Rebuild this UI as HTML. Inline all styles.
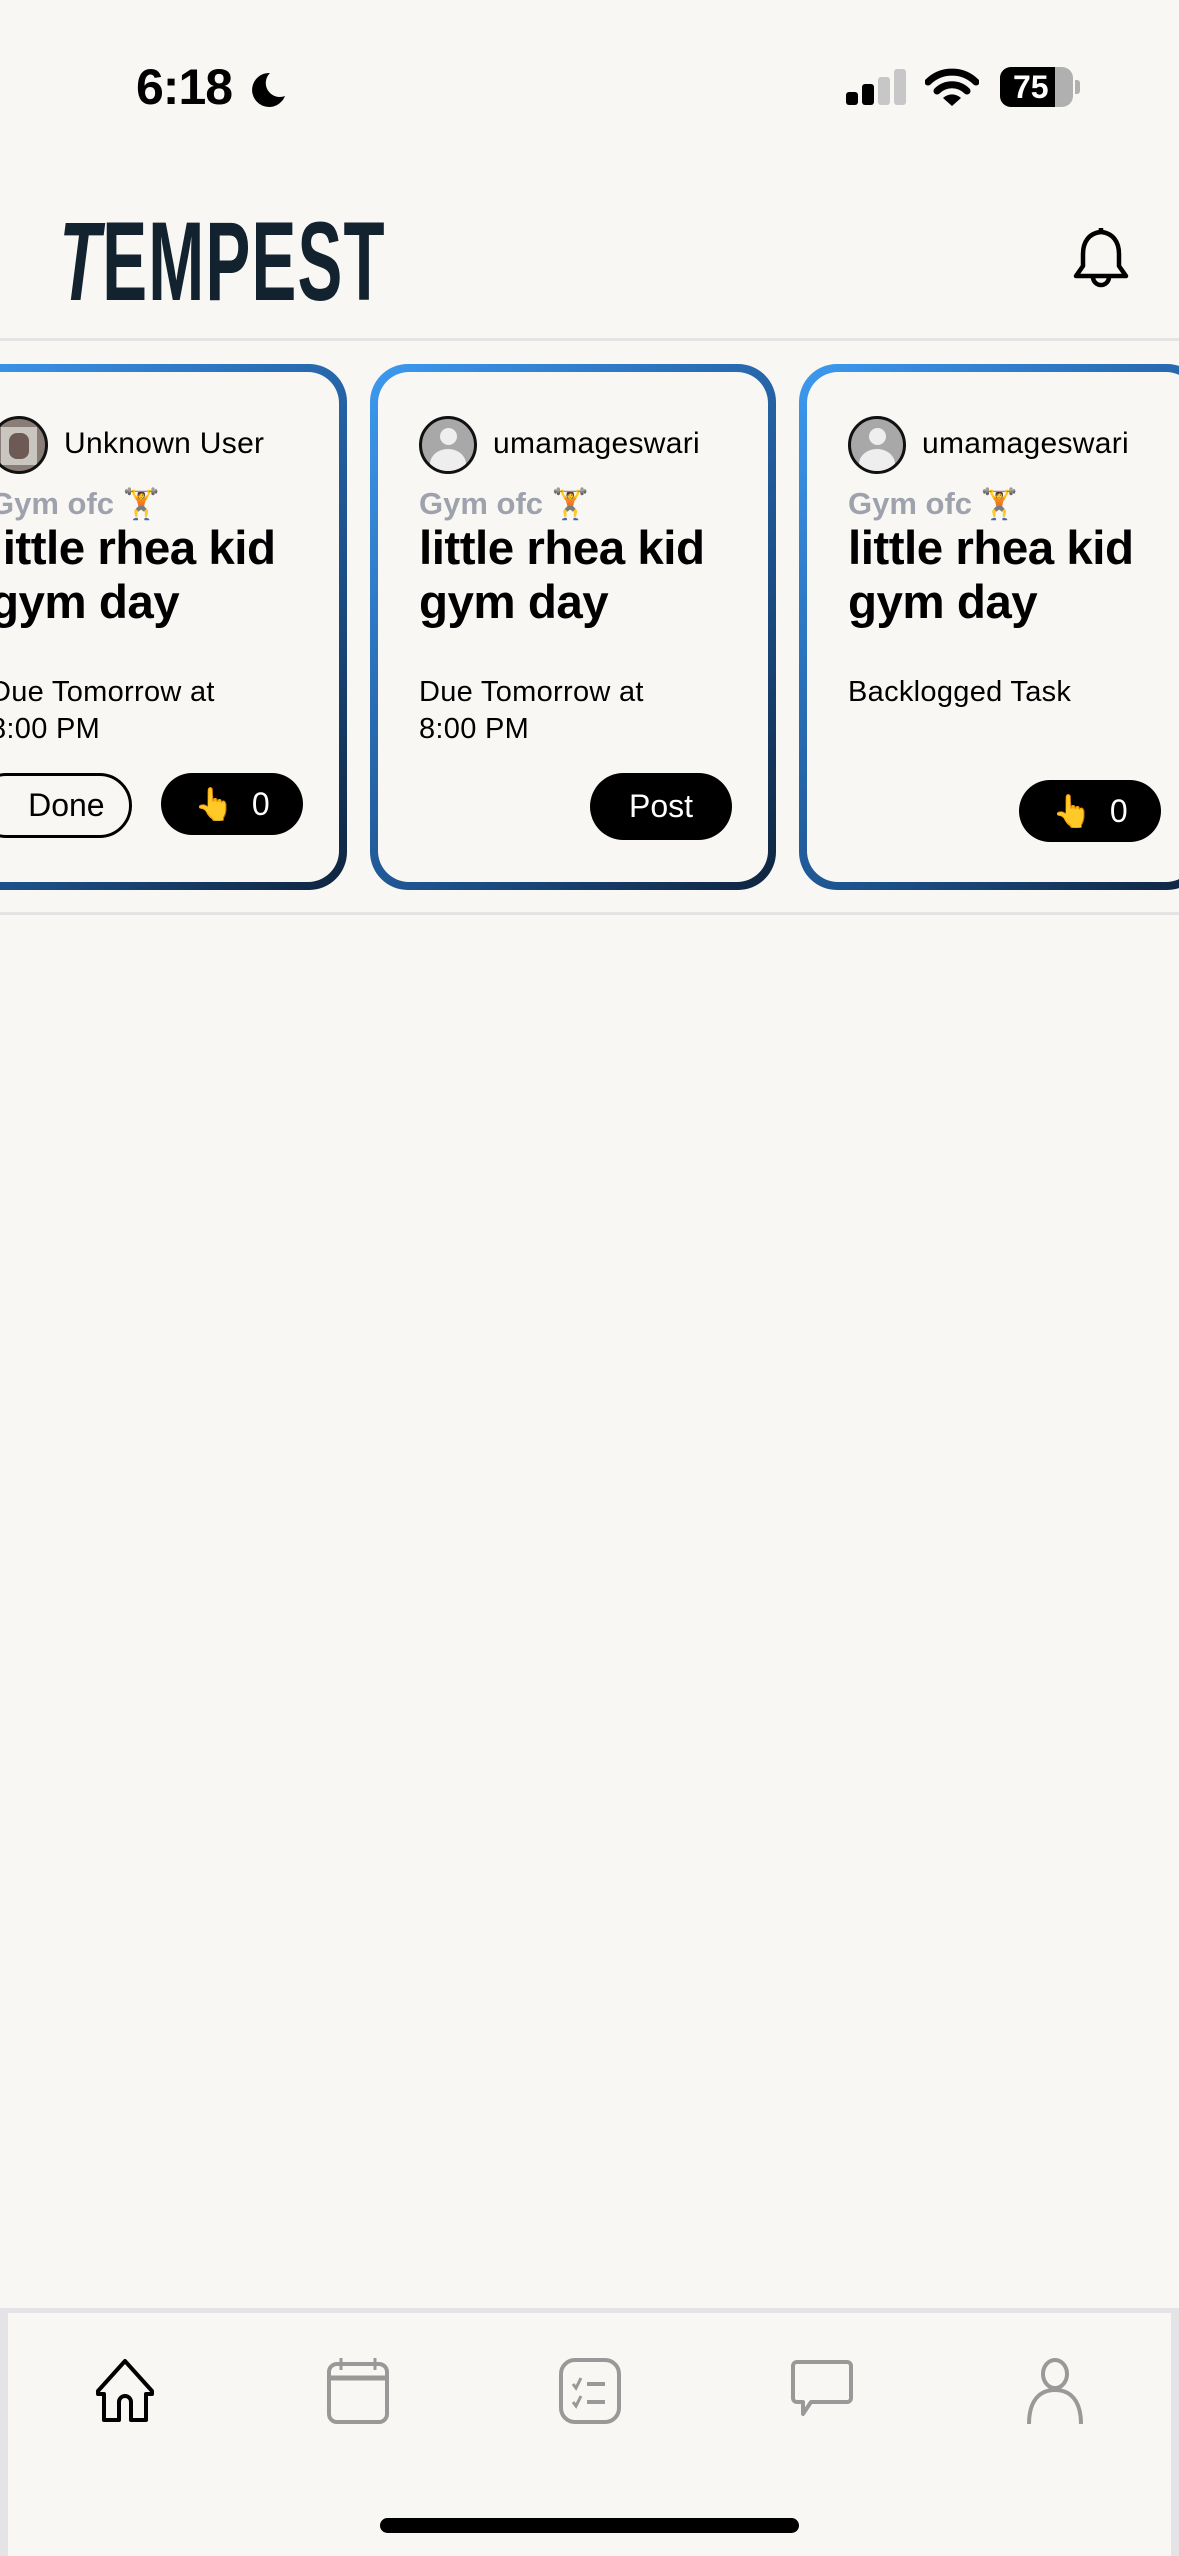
<!DOCTYPE html>
<html><head><meta charset="utf-8">
<style>
*{margin:0;padding:0;box-sizing:border-box}
html,body{width:1179px;height:2556px;overflow:hidden;background:#f8f7f4;font-family:"Liberation Sans",sans-serif;color:#000}
.abs{position:absolute}
.time{left:136px;top:58px;font-size:50px;font-weight:700;letter-spacing:-1px}
.logo{left:60px;top:206px;font-size:112px;font-weight:700;color:#13222f;transform:scaleX(0.6);transform-origin:left top;letter-spacing:2px;line-height:1;white-space:nowrap}
.hline{left:0;width:1179px;height:3px;background:#e4e4e4}
.card{top:364px;width:406px;height:526px;border-radius:38px;padding:8px;background:linear-gradient(135deg,#3d9af0 0%,#2a6fb8 35%,#1c4f88 65%,#0f243d 100%)}
.inner{width:100%;height:100%;border-radius:31px;background:#f8f7f4;position:relative}
.av{position:absolute;left:41px;top:44px;width:58px;height:58px;border-radius:50%;border:3px solid #111;background:#a8a8a8;overflow:hidden}
.uname{position:absolute;left:115px;top:55px;font-size:30px;letter-spacing:0.3px}
.gym{position:absolute;left:41px;top:114px;font-size:31px;font-weight:700;color:#9ea2ad}
.title{position:absolute;left:41px;top:150px;font-size:47.5px;font-weight:700;line-height:54px;letter-spacing:-0.5px}
.due{position:absolute;left:41px;top:302px;font-size:29px;line-height:37px;letter-spacing:0.3px}
.btn{position:absolute;border-radius:34px;font-size:32px;display:flex;align-items:center;justify-content:center}
.black{background:#000;color:#fff}
</style></head><body>
<div class="abs time">6:18</div>
<svg class="abs" style="left:248px;top:70px" width="40" height="40" viewBox="0 0 40 40"><path d="M22 3 A17 17 0 1 0 37 26 A14 14 0 0 1 22 3Z" fill="#000"/></svg>
<div class="abs" style="left:846px;top:92px;width:12px;height:13px;background:#000;border-radius:3px"></div>
<div class="abs" style="left:862px;top:84px;width:12px;height:21px;background:#000;border-radius:3px"></div>
<div class="abs" style="left:878px;top:77px;width:12px;height:28px;background:#c7c7c7;border-radius:3px"></div>
<div class="abs" style="left:894px;top:69px;width:12px;height:36px;background:#c7c7c7;border-radius:3px"></div>
<svg class="abs" style="left:925px;top:68px" width="54" height="40" viewBox="0 0 54 40"><path d="M3 14 A34 34 0 0 1 51 14" stroke="#000" stroke-width="7" fill="none" stroke-linecap="round"/><path d="M12 23 A21 21 0 0 1 42 23" stroke="#000" stroke-width="7" fill="none" stroke-linecap="round"/><path d="M27 38 L18 30 A13 13 0 0 1 36 30Z" fill="#000"/></svg>
<div class="abs" style="left:1000px;top:67px;width:73px;height:40px;border-radius:11px;background:#b0b0b0;overflow:hidden"><div style="width:55px;height:40px;background:#000"></div></div>
<div class="abs" style="left:1000px;top:67px;width:73px;height:40px;color:#fff;font-size:32px;font-weight:700;line-height:40px;padding-left:13px">75</div>
<div class="abs" style="left:1075px;top:80px;width:5px;height:14px;border-radius:0 3px 3px 0;background:#b0b0b0"></div>
<div class="abs logo"><span style="display:inline-block;transform:skewX(-12deg)">T</span>EMPEST</div>
<svg class="abs" style="left:1068px;top:224px" width="66" height="68" viewBox="0 0 66 68"><path d="M33 4 C33 4 33 8 33 8 C21 9 15 18 15 30 L15 42 L8 52 L58 52 L51 42 L51 30 C51 18 45 9 33 8" fill="none" stroke="#000" stroke-width="4.5" stroke-linejoin="round"/><path d="M25 53 A8 8 0 0 0 41 53" fill="none" stroke="#000" stroke-width="4.5"/></svg>
<div class="abs hline" style="top:338px"></div>

<div class="abs card" style="left:-59px"><div class="inner">
<div class="av" style="background:#8a7d78"><div style="position:absolute;left:8px;top:8px;width:36px;height:38px;background:#c9c6c0"></div><div style="position:absolute;left:16px;top:14px;width:20px;height:26px;background:#6d5a55;border-radius:8px"></div></div>
<div class="uname">Unknown User</div>
<div class="gym">Gym ofc <span style="font-size:30px">🏋️</span></div>
<div class="title">little rhea kid<br>gym day</div>
<div class="due">Due Tomorrow at<br>8:00 PM</div>
<div class="btn" style="left:25px;top:401px;width:158px;height:65px;border:3px solid #000;">&nbsp;&nbsp;&nbsp;Done</div>
<div class="btn black" style="left:212px;top:401px;width:142px;height:62px">👆&nbsp;&nbsp;0</div>
</div></div>

<div class="abs card" style="left:370px"><div class="inner">
<div class="av"><div style="position:absolute;left:18px;top:9px;width:17px;height:17px;border-radius:50%;background:#eee"></div><div style="position:absolute;left:8px;top:30px;width:36px;height:30px;border-radius:50% 50% 0 0;background:#eee"></div></div>
<div class="uname">umamageswari</div>
<div class="gym">Gym ofc <span style="font-size:30px">🏋️</span></div>
<div class="title">little rhea kid<br>gym day</div>
<div class="due">Due Tomorrow at<br>8:00 PM</div>
<div class="btn black" style="left:212px;top:401px;width:142px;height:67px">Post</div>
</div></div>

<div class="abs card" style="left:799px"><div class="inner">
<div class="av"><div style="position:absolute;left:18px;top:9px;width:17px;height:17px;border-radius:50%;background:#eee"></div><div style="position:absolute;left:8px;top:30px;width:36px;height:30px;border-radius:50% 50% 0 0;background:#eee"></div></div>
<div class="uname">umamageswari</div>
<div class="gym">Gym ofc <span style="font-size:30px">🏋️</span></div>
<div class="title">little rhea kid<br>gym day</div>
<div class="due">Backlogged Task</div>
<div class="btn black" style="left:212px;top:408px;width:142px;height:62px">👆&nbsp;&nbsp;0</div>
</div></div>

<div class="abs hline" style="top:912px"></div>

<div class="abs" style="left:0;top:2308px;width:1179px;height:248px;background:#e4e4e6"></div>
<div class="abs" style="left:8px;top:2313px;width:1163px;height:243px;background:#f8f7f4"></div>
<svg class="abs" style="left:92px;top:2358px" width="66" height="66" viewBox="0 0 66 66"><path d="M33 3 L6 33 L6 36 L12 36 L12 62 L27 62 L27 44 A6 6 0 0 1 39 44 L39 62 L54 62 L54 36 L60 36 L60 33 Z" fill="none" stroke="#000" stroke-width="4" stroke-linejoin="round"/></svg>
<svg class="abs" style="left:325px;top:2356px" width="66" height="70" viewBox="0 0 66 70"><rect x="4" y="8" width="58" height="58" rx="8" fill="none" stroke="#999" stroke-width="4"/><line x1="4" y1="22" x2="62" y2="22" stroke="#999" stroke-width="5"/><line x1="16" y1="2" x2="16" y2="14" stroke="#999" stroke-width="3"/><line x1="50" y1="2" x2="50" y2="14" stroke="#999" stroke-width="3"/></svg>
<svg class="abs" style="left:557px;top:2356px" width="66" height="70" viewBox="0 0 66 70"><rect x="4" y="4" width="58" height="62" rx="14" fill="none" stroke="#999" stroke-width="4"/><path d="M16 28 L19 32 L24 22 M16 46 L19 50 L24 40" fill="none" stroke="#999" stroke-width="3"/><line x1="30" y1="28" x2="48" y2="28" stroke="#999" stroke-width="4"/><line x1="30" y1="46" x2="48" y2="46" stroke="#999" stroke-width="4"/></svg>
<svg class="abs" style="left:789px;top:2358px" width="66" height="66" viewBox="0 0 66 66"><path d="M8 4 H58 A4 4 0 0 1 62 8 V40 A4 4 0 0 1 58 44 H22 L14 56 L14 44 H8 A4 4 0 0 1 4 40 V8 A4 4 0 0 1 8 4Z" fill="none" stroke="#999" stroke-width="4" stroke-linejoin="round"/></svg>
<svg class="abs" style="left:1022px;top:2356px" width="66" height="70" viewBox="0 0 66 70"><ellipse cx="33" cy="18" rx="12" ry="14" fill="none" stroke="#999" stroke-width="4"/><path d="M7 68 C7 44 18 34 33 34 C48 34 59 44 59 68" fill="none" stroke="#999" stroke-width="4"/></svg>
<div class="abs" style="left:380px;top:2518px;width:419px;height:15px;border-radius:8px;background:#000"></div>
</body></html>
